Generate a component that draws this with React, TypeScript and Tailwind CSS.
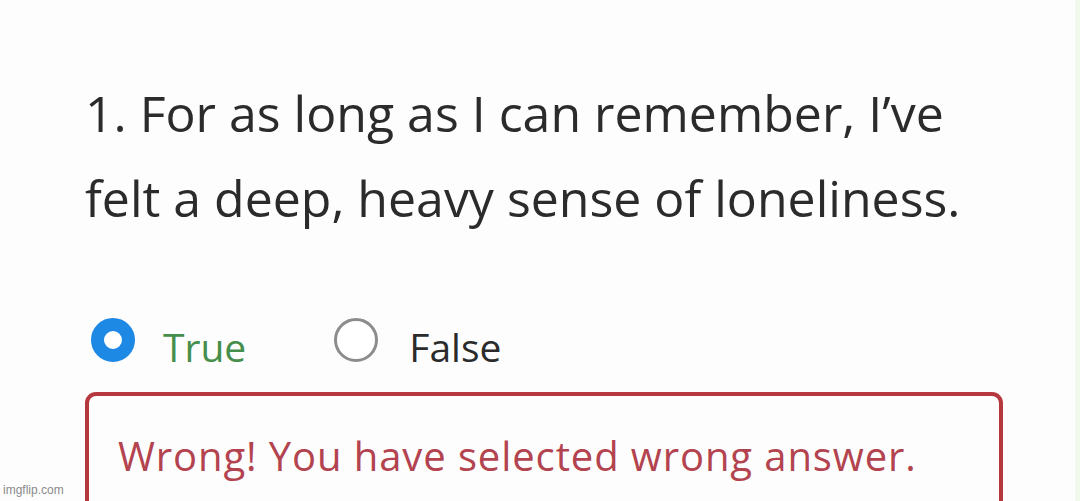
export default function App() {
  return (
    <div className="relative h-[501px] w-[1080px] overflow-hidden bg-[#fdfdfd] font-['Open_Sans',sans-serif]">
      <div className="flex h-full">
        <div className="flex-1 pl-[85px] pt-[71px]">
          {/* question */}
          <p className="text-[50px] leading-[85px] text-[#2b2b2b]">
            1. For as long as I can remember, I’ve
            <br />
            felt a deep, heavy sense of loneliness.
          </p>

          {/* answers */}
          <div className="mt-[77px] flex items-start">
            <span className="ml-[6px] h-[44px] w-[44px] rounded-full border-[13px] border-[#1e88e5] bg-white" />
            <span className="ml-[28px] mt-[9px] text-[39px] leading-none text-[#468e4b]">True</span>
            <span className="ml-[88px] h-[44px] w-[44px] rounded-full border-[3px] border-[#8c8c8c] bg-white" />
            <span className="ml-[31px] mt-[9px] text-[39px] leading-none text-[#2b2b2b]">False</span>
          </div>

          {/* feedback */}
          <div className="mt-[26px] h-[140px] w-[918px] rounded-[11px] border-[4px] border-[#b7373f] pl-[29px] pt-[40px]">
            <p className="text-[40px] leading-none tracking-[0.9px] text-[#b3434f]">
              Wrong! You have selected wrong answer.
            </p>
          </div>
        </div>
        <div className="w-[5px] bg-[#f1f8ee]" />
      </div>

      <span className="absolute bottom-[2px] left-[3px] text-[12px] text-[#8a8a8a] font-['Liberation_Sans',sans-serif]">
        imgflip.com
      </span>
    </div>
  );
}
